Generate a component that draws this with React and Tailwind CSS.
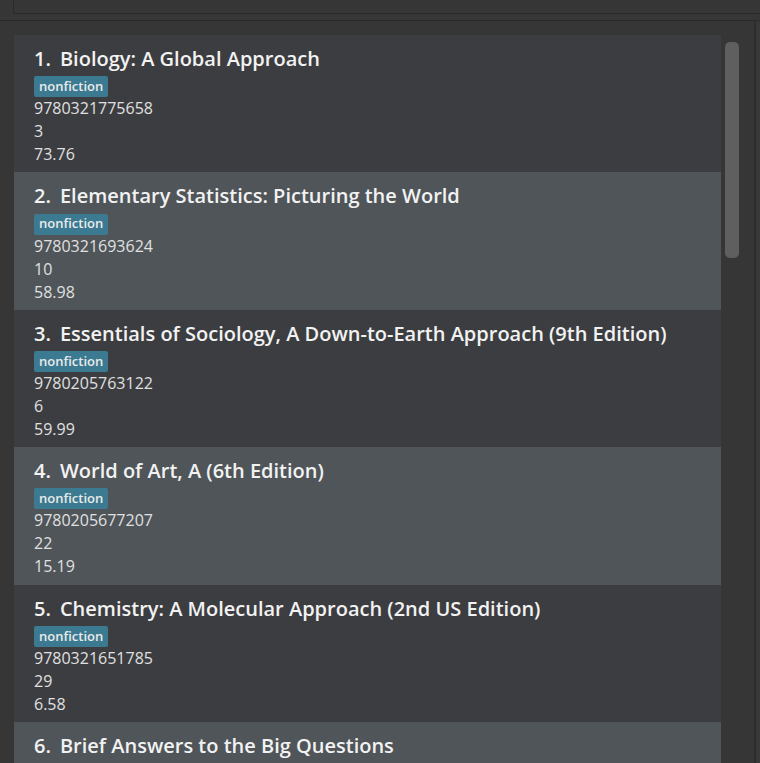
import React from "react";

const books = [
  { title: "Biology: A Global Approach", isbn: "9780321775658", qty: "3", price: "73.76" },
  { title: "Elementary Statistics: Picturing the World", isbn: "9780321693624", qty: "10", price: "58.98" },
  { title: "Essentials of Sociology, A Down-to-Earth Approach (9th Edition)", isbn: "9780205763122", qty: "6", price: "59.99" },
  { title: "World of Art, A (6th Edition)", isbn: "9780205677207", qty: "22", price: "15.19" },
  { title: "Chemistry: A Molecular Approach (2nd US Edition)", isbn: "9780321651785", qty: "29", price: "6.58" },
  { title: "Brief Answers to the Big Questions", isbn: "9781984819192", qty: "12", price: "18.00" },
];

export default function App() {
  return (
    <div
      className="w-[760px] h-[763px] overflow-hidden bg-[#363636] text-[#e0e0e0]"
      style={{ fontFamily: '"Open Sans", "Noto Sans", sans-serif' }}
    >
      <div className="h-[21px] border-b border-[#2a2a2a] pl-[13px]">
        <div className="h-[14px] border-l border-b border-[#2a2a2a]" />
      </div>
      <div className="flex h-[742px]">
        <div className="flex w-[754px] pl-[14px] pt-[14px]">
          <div className="w-[707px] flex flex-col">
            {books.map((b, i) => (
              <div
                key={i}
                className={`h-[137.4px] shrink-0 pl-[20px] pt-[10px] ${
                  i % 2 === 0 ? "bg-[#3c3d40]" : "bg-[#4f5559]"
                }`}
              >
                <div className="text-[20px] leading-[28px] font-semibold text-[#f2f2f2] whitespace-nowrap">
                  <span className="mr-[9px]">{i + 1}.</span>
                  {b.title}
                </div>
                <div className="mt-[3px] h-[21px] inline-flex items-center rounded-[2px] bg-[#3b7a90] px-[5px] text-[13px] font-semibold text-[#eaeaea]">
                  nonfiction
                </div>
                <div className="text-[16px] leading-[23px]">{b.isbn}</div>
                <div className="text-[16px] leading-[23px]">{b.qty}</div>
                <div className="text-[16px] leading-[23px]">{b.price}</div>
              </div>
            ))}
          </div>
          <div className="ml-[4px] pt-[7px]">
            <div className="w-[14px] h-[216px] rounded-[5px] bg-[#5f5f5f]" />
          </div>
        </div>
        <div className="w-[2px] bg-[#2c2c2c]" />
        <div className="flex-1 bg-[#383838]" />
      </div>
    </div>
  );
}
